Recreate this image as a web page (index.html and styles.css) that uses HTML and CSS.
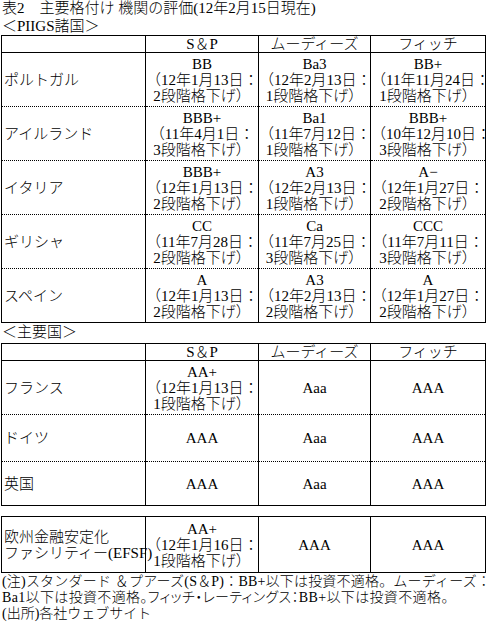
FILE: index.html
```html
<!DOCTYPE html>
<html lang="ja">
<head>
<meta charset="utf-8">
<title>主要格付け機関の評価</title>
<link rel="stylesheet" href="styles.css">
</head>
<body>
<div class="page">
  <div class="title">表2　主要格付け 機関の評価(12年2月15日現在)</div>
  <div class="section">＜PIIGS諸国＞</div>
  <table class="rt">
    <colgroup><col class="c0"><col class="c1"><col class="c2"><col class="c3"></colgroup>
    <thead>
      <tr class="hd"><th></th><th>S＆P</th><th>ムーディーズ</th><th>フィッチ</th></tr>
    </thead>
    <tbody>
      <tr class="r3">
        <td class="nm">ポルトガル</td>
        <td>BB<br>（12年1月13日：<br>2段階格下げ）</td>
        <td>Ba3<br>（12年2月13日：<br>1段階格下げ）</td>
        <td>BB+<br>（11年11月24日：<br>1段階格下げ）</td>
      </tr>
      <tr class="r3">
        <td class="nm">アイルランド</td>
        <td>BBB+<br>（11年4月1日：<br>3段階格下げ）</td>
        <td>Ba1<br>（11年7月12日：<br>1段階格下げ）</td>
        <td>BBB+<br>（10年12月10日：<br>3段階格下げ）</td>
      </tr>
      <tr class="r3">
        <td class="nm">イタリア</td>
        <td>BBB+<br>（12年1月13日：<br>2段階格下げ）</td>
        <td>A3<br>（12年2月13日：<br>1段階格下げ）</td>
        <td>A−<br>（12年1月27日：<br>2段階格下げ）</td>
      </tr>
      <tr class="r3">
        <td class="nm">ギリシャ</td>
        <td>CC<br>（11年7月28日：<br>2段階格下げ）</td>
        <td>Ca<br>（11年7月25日：<br>3段階格下げ）</td>
        <td>CCC<br>（11年7月11日：<br>3段階格下げ）</td>
      </tr>
      <tr class="r3">
        <td class="nm">スペイン</td>
        <td>A<br>（12年1月13日：<br>2段階格下げ）</td>
        <td>A3<br>（12年2月13日：<br>2段階格下げ）</td>
        <td>A<br>（12年1月27日：<br>2段階格下げ）</td>
      </tr>
    </tbody>
  </table>
  <div class="section sec2">＜主要国＞</div>
  <table class="rt">
    <colgroup><col class="c0"><col class="c1"><col class="c2"><col class="c3"></colgroup>
    <thead>
      <tr class="hd"><th></th><th>S＆P</th><th>ムーディーズ</th><th>フィッチ</th></tr>
    </thead>
    <tbody>
      <tr class="r3">
        <td class="nm">フランス</td>
        <td>AA+<br>（12年1月13日：<br>1段階格下げ）</td>
        <td>Aaa</td>
        <td>AAA</td>
      </tr>
      <tr class="r1">
        <td class="nm">ドイツ</td>
        <td>AAA</td>
        <td>Aaa</td>
        <td>AAA</td>
      </tr>
      <tr class="r1b">
        <td class="nm">英国</td>
        <td>AAA</td>
        <td>Aaa</td>
        <td>AAA</td>
      </tr>
    </tbody>
  </table>
  <table class="rt efsf">
    <colgroup><col class="c0"><col class="c1"><col class="c2"><col class="c3"></colgroup>
    <tbody>
      <tr class="re">
        <td class="nm">欧州金融安定化<br>ファシリティー(EFSF)</td>
        <td>AA+<br>（12年1月16日：<br>1段階格下げ）</td>
        <td>AAA</td>
        <td>AAA</td>
      </tr>
    </tbody>
  </table>
  <div class="notes">
    <div class="nl wide">(注)スタンダード ＆プアーズ(S＆P)：BB+以下は投資不適格。ムーディーズ：</div>
    <div class="nl prop">Ba1以下は投資不適格。フィッチ・レーティングス：BB+以下は投資不適格。</div>
    <div class="nl">(出所)各社ウェブサイト</div>
  </div>
</div>
</body>
</html>
```

FILE: styles.css
```css
html, body {
  margin: 0;
  padding: 0;
  background: #fff;
}

body {
  font-family: "Liberation Serif", "Noto Sans CJK JP", serif;
  font-size: 15px;
  line-height: 16px;
  font-weight: 300;
  color: #000;
  width: 490px;
  height: 630px;
  overflow: hidden;
}

.page {
  display: flex;
  flex-direction: column;
  align-items: flex-start;
}

.title {
  height: 17px;
  line-height: 17px;
  padding-left: 2px;
  white-space: nowrap;
}

.section {
  height: 18px;
  line-height: 18px;
  padding-left: 2px;
  white-space: nowrap;
}

.sec2 {
  height: 20px;
  line-height: 18px;
}

.rt {
  border-collapse: collapse;
  table-layout: fixed;
  width: 485px;
  margin-left: 1px;
  border: 1px solid #000;
}

.c0 { width: 144px; }
.c1 { width: 113px; }
.c2 { width: 112px; }
.c3 { width: 115px; }

.rt th,
.rt td {
  padding: 0;
  text-align: center;
  vertical-align: middle;
  white-space: nowrap;
  font-weight: 300;
  border-left: 1px solid #000;
  border-right: 1px solid #000;
}

.rt th {
  height: 15px;
  border-bottom: 1px solid #000;
}

.rt tbody tr + tr td {
  border-top: 1px dotted #000;
}

.rt td.nm {
  text-align: left;
  padding-left: 2px;
}

.r3 td { height: 53px; }
.r1 td { height: 46px; }
.r1b td { height: 43px; }
.re td { height: 55px; }

.efsf {
  margin-top: 10px;
}

.notes {
  padding-left: 2px;
  padding-top: 1px;
  font-size: 14px;
}

.nl {
  height: 16px;
  line-height: 16px;
  white-space: nowrap;
}

.nl.wide {
  letter-spacing: 0.2px;
}

.nl.prop {
  font-feature-settings: "palt";
  letter-spacing: 0.35px;
}
```
